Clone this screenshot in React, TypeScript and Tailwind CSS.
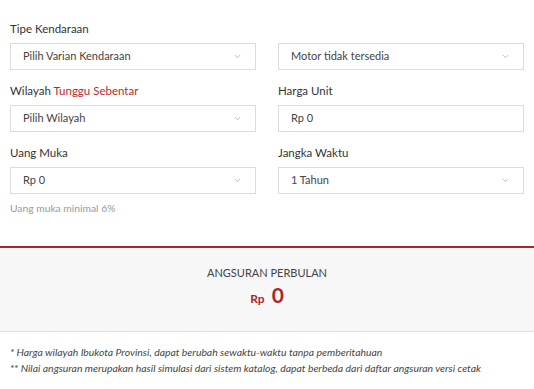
import { ChevronDown } from 'lucide-react';

const Select = ({ value }: { value: string }) => (
  <div className="flex h-[27px] items-center justify-between border border-[#dcdcdc] bg-white pl-[12px] pr-[13px]">
    <span className="text-[11px] text-[#444]">{value}</span>
    <ChevronDown className="h-[9px] w-[9px] text-[#888]" strokeWidth={1.5} />
  </div>
);

const Input = ({ value }: { value: string }) => (
  <div className="flex h-[27px] items-center border border-[#dcdcdc] bg-white pl-[12px]">
    <span className="text-[11px] text-[#444]">{value}</span>
  </div>
);

const Label = ({ children }: { children: React.ReactNode }) => (
  <p className="mb-[6px] h-[16px] text-[11.5px] leading-[16px] text-[#333]">{children}</p>
);

export default function App() {
  return (
    <div className="h-[389px] w-[534px] overflow-hidden bg-white font-['Lato',sans-serif]">
      <div className="grid grid-cols-2 gap-x-[22px] gap-y-[13px] px-[10px] pt-[21px]">
        <div>
          <Label>Tipe Kendaraan</Label>
          <Select value="Pilih Varian Kendaraan" />
        </div>
        <div>
          <div className="mb-[6px] h-[16px]" />
          <Select value="Motor tidak tersedia" />
        </div>
        <div>
          <Label>
            Wilayah <span className="text-[#c0272d]">Tunggu Sebentar</span>
          </Label>
          <Select value="Pilih Wilayah" />
        </div>
        <div>
          <Label>Harga Unit</Label>
          <Input value="Rp 0" />
        </div>
        <div>
          <Label>Uang Muka</Label>
          <Select value="Rp 0" />
          <p className="mt-[7px] text-[10.3px] text-[#999]">Uang muka minimal 6%</p>
        </div>
        <div>
          <Label>Jangka Waktu</Label>
          <Select value="1 Tahun" />
        </div>
      </div>

      <div className="mt-[30px] border-t-2 border-b border-t-[#a8262b] border-b-[#dddddd] bg-[#f7f7f7] pt-[18px] pb-[23px] text-center">
        <p className="text-[11px] leading-[14px] text-[#444]">ANGSURAN PERBULAN</p>
        <p className="mt-[2px] flex items-baseline justify-center gap-[7px] font-bold text-[#b0242a]">
          <span className="text-[12px]">Rp</span>
          <span className="text-[21px] leading-[26px]">0</span>
        </p>
      </div>

      <div className="px-[10px] pt-[12px] text-[10.4px] italic leading-[16px] text-[#444]">
        <p>* Harga wilayah Ibukota Provinsi, dapat berubah sewaktu-waktu tanpa pemberitahuan</p>
        <p>** Nilai angsuran merupakan hasil simulasi dari sistem katalog, dapat berbeda dari daftar angsuran versi cetak</p>
      </div>
    </div>
  );
}
